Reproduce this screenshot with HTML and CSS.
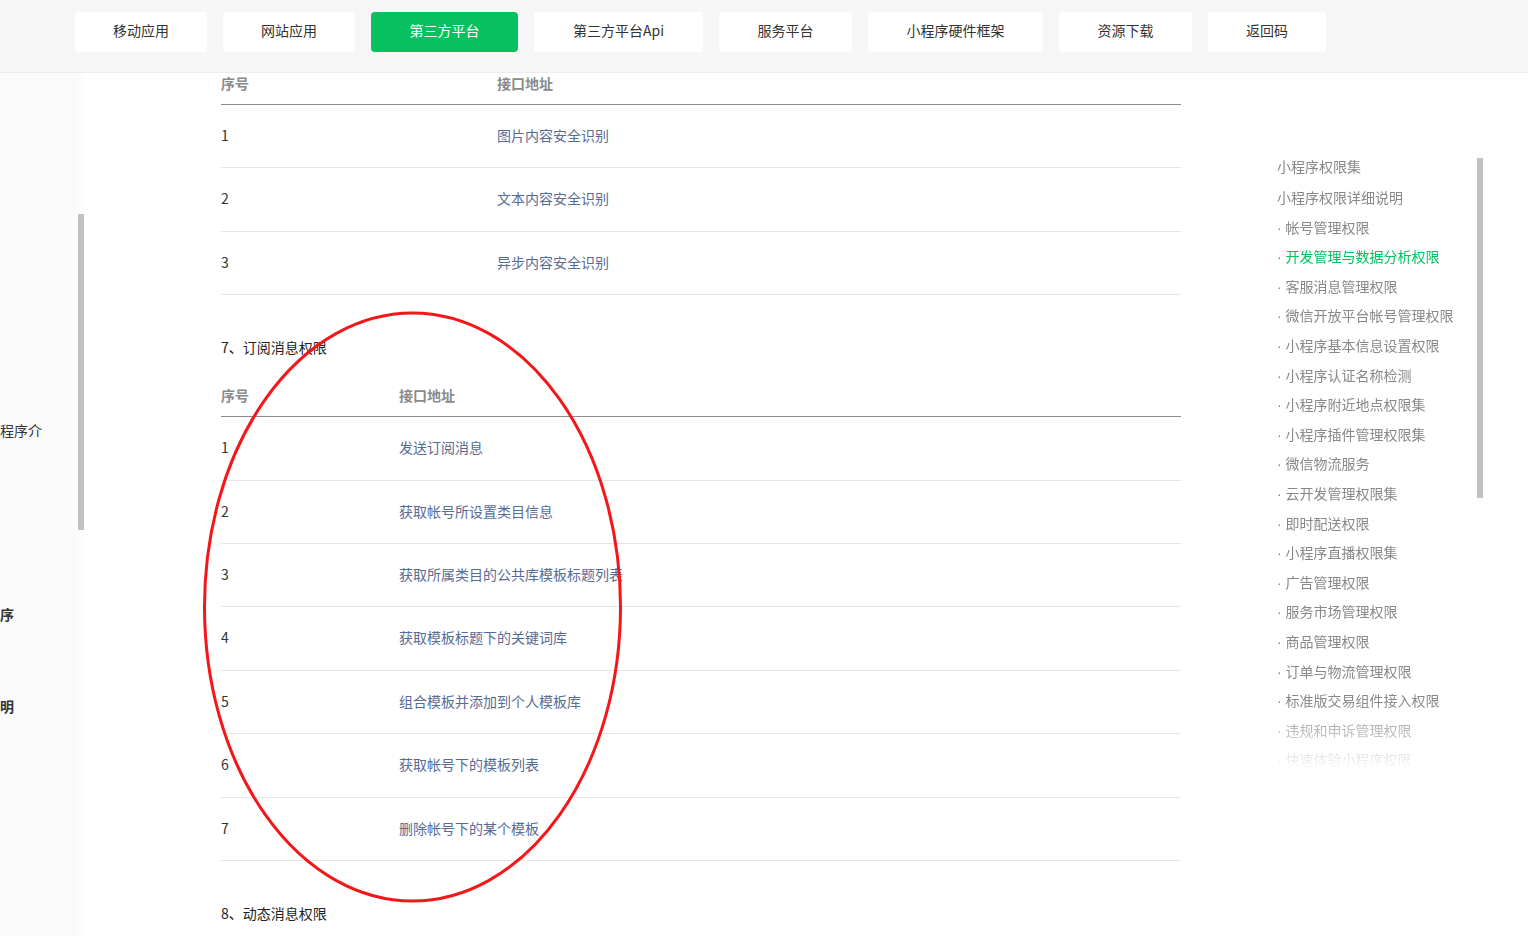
FILE: index.html
```html
<!DOCTYPE html>
<html lang="zh-CN">
<head>
<meta charset="utf-8">
<title>小程序权限集</title>
<link rel="stylesheet" href="styles.css">
</head>
<body>
<header class="topbar">
  <nav class="tabs">
    <a class="tab w132">移动应用</a>
    <a class="tab w132">网站应用</a>
    <a class="tab w147 active">第三方平台</a>
    <a class="tab w169">第三方平台Api</a>
    <a class="tab w133">服务平台</a>
    <a class="tab w175">小程序硬件框架</a>
    <a class="tab w133">资源下载</a>
    <a class="tab w118">返回码</a>
  </nav>
</header>
<div class="page">
  <aside class="side">
    <div class="side-body">
      <div class="side-item s1">程序介</div>
      <div class="side-item s2 strong">序</div>
      <div class="side-item s3 strong">明</div>
    </div>
    <div class="side-track"><div class="side-thumb"></div></div>
  </aside>
  <main class="content">
    <table class="api-table cut wide">
      <thead><tr><th class="col-num">序号</th><th>接口地址</th></tr></thead>
      <tbody>
        <tr><td>1</td><td><a class="link">图片内容安全识别</a></td></tr>
        <tr><td>2</td><td><a class="link">文本内容安全识别</a></td></tr>
        <tr><td>3</td><td><a class="link">异步内容安全识别</a></td></tr>
      </tbody>
    </table>
    <h3 class="section-title">7、订阅消息权限</h3>
    <table class="api-table narrow">
      <thead><tr><th class="col-num">序号</th><th>接口地址</th></tr></thead>
      <tbody>
        <tr><td>1</td><td><a class="link">发送订阅消息</a></td></tr>
        <tr><td>2</td><td><a class="link">获取帐号所设置类目信息</a></td></tr>
        <tr><td>3</td><td><a class="link">获取所属类目的公共库模板标题列表</a></td></tr>
        <tr><td>4</td><td><a class="link">获取模板标题下的关键词库</a></td></tr>
        <tr><td>5</td><td><a class="link">组合模板并添加到个人模板库</a></td></tr>
        <tr><td>6</td><td><a class="link">获取帐号下的模板列表</a></td></tr>
        <tr><td>7</td><td><a class="link">删除帐号下的某个模板</a></td></tr>
      </tbody>
    </table>
    <h3 class="section-title">8、动态消息权限</h3>
  </main>
  <aside class="toc">
    <ul class="toc-list">
      <li class="toc-head">小程序权限集</li>
      <li>小程序权限详细说明</li>
      <li><span class="dot">· </span>帐号管理权限</li>
      <li class="on"><span class="dot">· </span>开发管理与数据分析权限</li>
      <li><span class="dot">· </span>客服消息管理权限</li>
      <li><span class="dot">· </span>微信开放平台帐号管理权限</li>
      <li><span class="dot">· </span>小程序基本信息设置权限</li>
      <li><span class="dot">· </span>小程序认证名称检测</li>
      <li><span class="dot">· </span>小程序附近地点权限集</li>
      <li><span class="dot">· </span>小程序插件管理权限集</li>
      <li><span class="dot">· </span>微信物流服务</li>
      <li><span class="dot">· </span>云开发管理权限集</li>
      <li><span class="dot">· </span>即时配送权限</li>
      <li><span class="dot">· </span>小程序直播权限集</li>
      <li><span class="dot">· </span>广告管理权限</li>
      <li><span class="dot">· </span>服务市场管理权限</li>
      <li><span class="dot">· </span>商品管理权限</li>
      <li><span class="dot">· </span>订单与物流管理权限</li>
      <li><span class="dot">· </span>标准版交易组件接入权限</li>
      <li><span class="dot">· </span>违规和申诉管理权限</li>
      <li><span class="dot">· </span>快速体验小程序权限</li>
    </ul>
    <div class="toc-track"><div class="toc-thumb"></div></div>
  </aside>
</div>
<svg class="annot" width="1528" height="936" viewBox="0 0 1528 936">
  <ellipse cx="412.5" cy="607" rx="208" ry="294" fill="none" stroke="#f5161a" stroke-width="3"/>
</svg>
</body>
</html>
```
FILE: styles.css
```css
* { box-sizing: border-box; }
html, body { margin: 0; padding: 0; }
body {
  width: 1528px;
  height: 936px;
  overflow: hidden;
  position: relative;
  background: #fff;
  font-family: "Noto Sans CJK SC", "Noto Sans", sans-serif;
  font-size: 14px;
  color: #333;
}
.topbar {
  height: 73px;
  background: #f6f6f6;
  border-bottom: 1px solid #ececec;
}
.tabs {
  display: flex;
  gap: 16px;
  padding: 12px 0 0 75px;
}
.tab {
  display: block;
  height: 40px;
  line-height: 37px;
  padding-bottom: 3px;
  text-align: center;
  background: #fff;
  border-radius: 4px;
  color: #333;
  font-size: 14px;
  white-space: nowrap;
  flex-shrink: 0;
}
.w118 { width: 118px; }
.w132 { width: 132px; }
.w133 { width: 133px; }
.w147 { width: 147px; }
.w169 { width: 169px; }
.w175 { width: 175px; }
.tab.active { background: #07c160; color: #fff; }

.page {
  display: flex;
  height: 863px;
  overflow: hidden;
}
.side {
  display: flex;
  width: 84px;
  flex-shrink: 0;
}
.side-body {
  width: 78px;
  background: #fafafa;
  overflow: hidden;
  padding-top: 347px;
}
.side-item {
  line-height: 20px;
  font-size: 14px;
  color: #333;
  white-space: nowrap;
}
.side-item.strong { font-weight: bold; }
.side-item.s2 { margin-top: 164px; }
.side-item.s3 { margin-top: 72px; }
.side-track { width: 6px; background: #fcfcfc; }
.side-thumb {
  margin-top: 141px;
  height: 316px;
  background: #c1c1c1;
}

.content {
  width: 1097px;
  flex-shrink: 0;
  padding-left: 137px;
}
.api-table {
  width: 960px;
  border-collapse: collapse;
  table-layout: fixed;
}
.api-table th {
  text-align: left;
  font-weight: bold;
  color: #8a8a8a;
  font-size: 14px;
  line-height: 22px;
  padding: 10px 0;
  border-bottom: 1px solid #8c8c8c;
}
.api-table.cut th { padding: 0 0 11px; line-height: 20px; }
.api-table.wide .col-num { width: 276px; }
.api-table.narrow .col-num { width: 178px; }
.api-table td {
  padding: 19px 0 21px;
  line-height: 22.4px;
  font-size: 14px;
  color: #333;
  border-bottom: 1px solid #e5e5e5;
  white-space: nowrap;
}
.link { color: #576b95; text-decoration: none; }
.section-title {
  margin: 41px 0 16px;
  font-size: 14px;
  font-weight: normal;
  line-height: 22px;
  color: #222;
}

.toc {
  display: flex;
  margin-left: 96px;
  width: 206px;
  flex-shrink: 0;
}
.toc-list {
  list-style: none;
  margin: 0;
  padding: 0;
  margin-top: 78px;
  width: 200px;
  height: 625px;
  overflow: hidden;
  -webkit-mask-image: linear-gradient(to bottom, #000 0, #000 550px, rgba(0,0,0,0) 620px);
  mask-image: linear-gradient(to bottom, #000 0, #000 550px, rgba(0,0,0,0) 620px);
}
.toc-list li {
  height: 29.6px;
  line-height: 29.6px;
  font-size: 14px;
  color: #888;
  white-space: nowrap;
  overflow: hidden;
}
.toc-list .dot {
  font-family: "Liberation Sans", sans-serif;
  line-height: 1;
}
.toc-list li.toc-head { height: 30px; line-height: 30px; margin-bottom: 2px; }
.toc-list li.on { color: #07c160; }
.toc-track { width: 6px; }
.toc-thumb {
  margin-top: 85px;
  height: 340px;
  background: #c1c1c1;
}

.annot {
  position: absolute;
  left: 0;
  top: 0;
  pointer-events: none;
}
```
